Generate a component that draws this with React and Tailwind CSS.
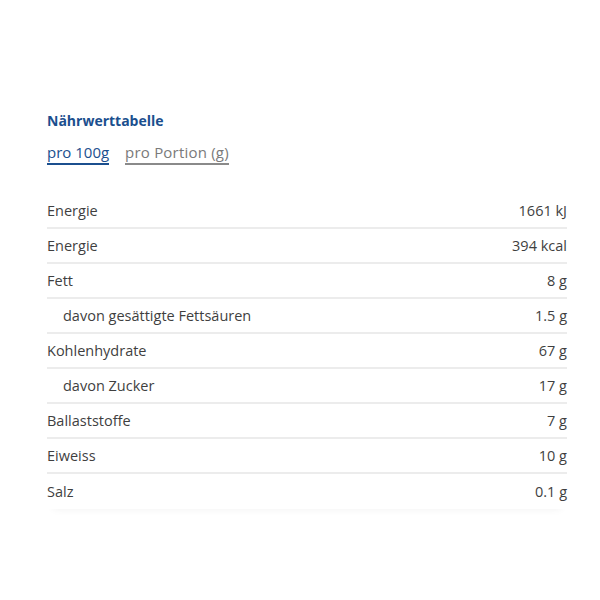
const rows = [
  { label: "Energie", value: "1661 kJ" },
  { label: "Energie", value: "394 kcal" },
  { label: "Fett", value: "8 g" },
  { label: "davon gesättigte Fettsäuren", value: "1.5 g", sub: true },
  { label: "Kohlenhydrate", value: "67 g" },
  { label: "davon Zucker", value: "17 g", sub: true },
  { label: "Ballaststoffe", value: "7 g" },
  { label: "Eiweiss", value: "10 g" },
  { label: "Salz", value: "0.1 g" },
]

export default function App() {
  return (
    <div className="w-[600px] h-[600px] bg-white font-['Open_Sans',sans-serif]">
      <div className="pt-[111px] pl-[47px] pr-[33px]">
        <h2 className="text-[14px] leading-[20px] font-bold text-[#1b4f8e]">Nährwerttabelle</h2>
        <div className="flex gap-[16px] mt-[11px] text-[15px] leading-[20px]">
          <span className="text-[#1b4f8e] border-b-2 border-[#1b4f8e] pb-[1px]">pro 100g</span>
          <span className="text-[#7a7a7a] border-b-2 border-[#8a8a8a] pb-[1px] tracking-[0.2px]">pro Portion (g)</span>
        </div>
        <div className="mt-[29px] shadow-[0_6px_8px_-6px_rgba(0,0,0,0.06)]">
          {rows.map((r, i) => (
            <div
              key={i}
              className={
                "flex items-center justify-between h-[35px] text-[14.5px] text-[#3f3f3f] " +
                (i < rows.length - 1 ? "border-b-2 border-[#ececec]" : "")
              }
            >
              <span className={r.sub ? "pl-[16px]" : ""}>{r.label}</span>
              <span>{r.value}</span>
            </div>
          ))}
        </div>
      </div>
    </div>
  )
}
